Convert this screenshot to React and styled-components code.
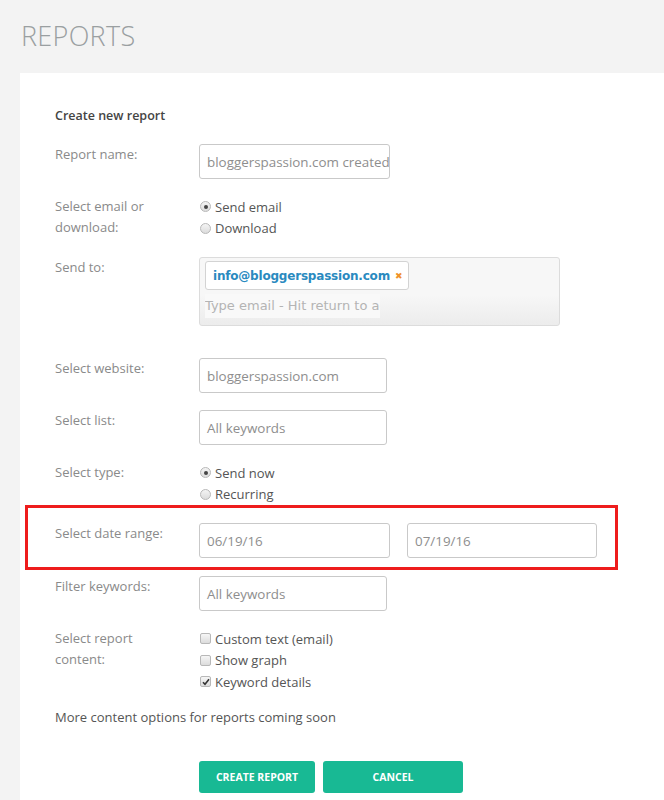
import React from 'react';
import styled, { createGlobalStyle } from 'styled-components';

const GlobalStyle = createGlobalStyle`
  html, body {
    margin: 0;
    padding: 0;
    background: #f3f3f3;
    font-family: "Open Sans", "Liberation Sans", sans-serif;
  }
`;

const Page = styled.div`
  width: 664px;
  height: 800px;
  overflow: hidden;
  background: #f3f3f3;
`;

const Title = styled.h1`
  margin: 0;
  padding: 17px 0 0 21px;
  height: 56px;
  box-sizing: border-box;
  font-size: 27px;
  font-weight: 300;
  color: #9a9fa1;
  letter-spacing: 0.3px;
`;

const Card = styled.div`
  margin: 17px 0 0 20px;
  background: #fff;
  padding: 32px 0 40px 35px;
  height: 800px;
  box-sizing: border-box;
`;

const Heading = styled.div`
  font-size: 12.5px;
  font-weight: 600;
  color: #444;
  line-height: 21px;
  margin-bottom: 18px;
`;

const Row = styled.div`
  display: flex;
  align-items: flex-start;
  margin-bottom: ${(p) => p.gap ?? 17}px;
`;

const Highlight = styled.div`
  display: flex;
  align-items: flex-start;
  width: 593px;
  box-sizing: border-box;
  margin: 0 0 6px -30px;
  padding: 15px 0 9px 27px;
  border: 3px solid #ee1c1c;
`;

const Label = styled.div`
  width: 144px;
  flex-shrink: 0;
  font-size: 13px;
  line-height: 21px;
  color: #8a8a8a;
`;

const Field = styled.div`
  width: ${(p) => p.w || 188}px;
  height: 35px;
  box-sizing: border-box;
  border: 1px solid #c9c9c9;
  border-radius: 3px;
  padding: 0 0 0 7px;
  display: flex;
  align-items: center;
  font-size: 13.4px;
  color: #8e8e8e;
  white-space: nowrap;
  overflow: hidden;
  margin-right: ${(p) => p.mr || 0}px;
`;

const Options = styled.div`
  display: flex;
  flex-direction: column;
`;

const Option = styled.div`
  display: flex;
  align-items: center;
  height: 21.5px;
  font-size: 13px;
  color: #555;
`;

const Radio = styled.span`
  width: 9px;
  height: 9px;
  border-radius: 50%;
  border: 1px solid #b8b8b8;
  background: linear-gradient(#f4f4f4, #dcdcdc);
  margin: 0 4px 0 1px;
  position: relative;
  &::after {
    content: '';
    display: ${(p) => (p.checked ? 'block' : 'none')};
    position: absolute;
    left: 2.5px;
    top: 2.5px;
    width: 4px;
    height: 4px;
    border-radius: 50%;
    background: #444;
  }
`;

const Check = styled.span`
  width: 9px;
  height: 9px;
  border-radius: 2px;
  border: 1px solid #b8b8b8;
  background: linear-gradient(#f6f6f6, #dcdcdc);
  margin: 0 4px 0 1px;
  display: flex;
  align-items: center;
  justify-content: center;
`;

const TagBox = styled.div`
  width: 361px;
  height: 69px;
  box-sizing: border-box;
  border: 1px solid #dcdcdc;
  border-radius: 3px;
  background: linear-gradient(#f7f7f7 0%, #f7f7f7 55%, #ececec 100%);
  padding: 3px 5px;
  font-family: "DejaVu Sans", Verdana, sans-serif;
`;

const Tag = styled.div`
  display: inline-flex;
  align-items: center;
  height: 29px;
  box-sizing: border-box;
  padding: 0 6px 0 7px;
  background: #fff;
  border: 1px solid #d3d3d3;
  border-radius: 3px;
  font-size: 12px;
  font-weight: bold;
  letter-spacing: -0.2px;
  color: #2a8abf;
`;

const Remove = styled.span`
  color: #f0922a;
  font-size: 9px;
  margin-left: 5px;
`;

const TypeInput = styled.div`
  width: 175px;
  margin-top: 4px;
  height: 24px;
  line-height: 24px;
  overflow: hidden;
  white-space: nowrap;
  font-size: 13px;
  color: #b4b4b4;
  background: #f9f9f9;
`;

const Note = styled.div`
  font-size: 13px;
  color: #555;
  line-height: 21px;
  margin: 14px 0 33px;
`;

const Buttons = styled.div`
  display: flex;
  gap: 8px;
  padding-left: 144px;
`;

const Button = styled.button`
  width: ${(p) => p.w}px;
  height: 32px;
  border: none;
  border-radius: 3px;
  background: #18b994;
  color: #fff;
  font-family: "Open Sans", sans-serif;
  font-weight: 700;
  font-size: 10.5px;
`;

const TickIcon = () => (
  <svg width="8" height="8" viewBox="0 0 8 8">
    <path d="M1 4.2 L3 6.3 L7 1.3" fill="none" stroke="#333" strokeWidth="1.6" />
  </svg>
);

export default function App() {
  return (
    <Page>
      <GlobalStyle />
      <Title>REPORTS</Title>
      <Card>
        <Heading>Create new report</Heading>

        <Row gap={17}>
          <Label>Report name:</Label>
          <Field w={191}>bloggerspassion.com created</Field>
        </Row>

        <Row gap={18}>
          <Label>Select email or<br />download:</Label>
          <Options>
            <Option><Radio checked />Send email</Option>
            <Option><Radio />Download</Option>
          </Options>
        </Row>

        <Row gap={32}>
          <Label>Send to:</Label>
          <TagBox>
            <Tag>info@bloggerspassion.com<Remove>✖</Remove></Tag>
            <TypeInput>Type email - Hit return to add</TypeInput>
          </TagBox>
        </Row>

        <Row gap={17}>
          <Label>Select website:</Label>
          <Field>bloggerspassion.com</Field>
        </Row>

        <Row gap={17}>
          <Label>Select list:</Label>
          <Field>All keywords</Field>
        </Row>

        <Row gap={0}>
          <Label>Select type:</Label>
          <Options>
            <Option><Radio checked />Send now</Option>
            <Option><Radio />Recurring</Option>
          </Options>
        </Row>

        <Highlight>
          <Label>Select date range:</Label>
          <Field w={191} mr={17}>06/19/16</Field>
          <Field w={190}>07/19/16</Field>
        </Highlight>

        <Row gap={17}>
          <Label>Filter keywords:</Label>
          <Field>All keywords</Field>
        </Row>

        <Row gap={0}>
          <Label>Select report<br />content:</Label>
          <Options>
            <Option><Check />Custom text (email)</Option>
            <Option><Check />Show graph</Option>
            <Option><Check><TickIcon /></Check>Keyword details</Option>
          </Options>
        </Row>

        <Note>More content options for reports coming soon</Note>

        <Buttons>
          <Button w={116}>CREATE REPORT</Button>
          <Button w={140}>CANCEL</Button>
        </Buttons>
      </Card>
    </Page>
  );
}
